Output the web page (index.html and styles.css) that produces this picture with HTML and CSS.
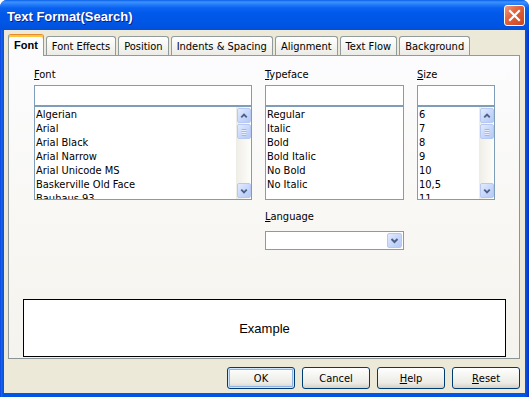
FILE: index.html
```html
<!DOCTYPE html>
<html lang="en">
<head>
<meta charset="utf-8">
<title>Text Format(Search)</title>
<link rel="stylesheet" href="styles.css">
</head>
<body>
<div class="window">
  <div class="titlebar">
    <span class="title">Text Format(Search)</span>
    <div class="close">
      <svg width="19" height="19" viewBox="0 0 19 19"><path d="M5 5 L14 14 M14 5 L5 14" stroke="#fff" stroke-width="2.2" stroke-linecap="square"/></svg>
    </div>
  </div>
  <div class="client">
    <div class="tabs">
      <div class="tab active">Font</div>
      <div class="tab">Font Effects</div>
      <div class="tab">Position</div>
      <div class="tab">Indents &amp; Spacing</div>
      <div class="tab">Alignment</div>
      <div class="tab">Text Flow</div>
      <div class="tab">Background</div>
    </div>
    <div class="panel">
      <div class="fields">
        <div class="col col-font">
          <div class="label"><u>F</u>ont</div>
          <div class="textbox"></div>
          <div class="listbox">
            <div class="items">
              <div class="item">Algerian</div>
              <div class="item">Arial</div>
              <div class="item">Arial Black</div>
              <div class="item">Arial Narrow</div>
              <div class="item">Arial Unicode MS</div>
              <div class="item">Baskerville Old Face</div>
              <div class="item">Bauhaus 93</div>
            </div>
            <div class="scrollbar">
              <div class="sbtn"><svg width="13" height="14" viewBox="0 0 13 14"><path d="M3.5 8.5 L6.5 5.5 L9.5 8.5" fill="none" stroke="#4D6185" stroke-width="2"/></svg></div>
              <div class="sbtn thumb"><svg width="13" height="14" viewBox="0 0 13 14"><path d="M4 4.5 H9 M4 6.5 H9 M4 8.5 H9 M4 10.5 H9" stroke="#8CA8E8" stroke-width="1"/><path d="M4 5.5 H9 M4 7.5 H9 M4 9.5 H9" stroke="#F2F6FE" stroke-width="1"/></svg></div>
              <div class="track"></div>
              <div class="sbtn"><svg width="13" height="14" viewBox="0 0 13 14"><path d="M3.5 5.5 L6.5 8.5 L9.5 5.5" fill="none" stroke="#4D6185" stroke-width="2"/></svg></div>
            </div>
          </div>
        </div>
        <div class="col col-type">
          <div class="label"><u>T</u>ypeface</div>
          <div class="textbox"></div>
          <div class="listbox">
            <div class="items">
              <div class="item">Regular</div>
              <div class="item">Italic</div>
              <div class="item">Bold</div>
              <div class="item">Bold Italic</div>
              <div class="item">No Bold</div>
              <div class="item">No Italic</div>
            </div>
          </div>
          <div class="label lang-label"><u>L</u>anguage</div>
          <div class="combo">
            <div class="sbtn dropbtn"><svg width="13" height="13" viewBox="0 0 13 13"><path d="M3.5 5 L6.5 8 L9.5 5" fill="none" stroke="#4D6185" stroke-width="2"/></svg></div>
          </div>
        </div>
        <div class="col col-size">
          <div class="label"><u>S</u>ize</div>
          <div class="textbox"></div>
          <div class="listbox">
            <div class="items">
              <div class="item">6</div>
              <div class="item">7</div>
              <div class="item">8</div>
              <div class="item">9</div>
              <div class="item">10</div>
              <div class="item">10,5</div>
              <div class="item">11</div>
            </div>
            <div class="scrollbar">
              <div class="sbtn"><svg width="13" height="14" viewBox="0 0 13 14"><path d="M3.5 8.5 L6.5 5.5 L9.5 8.5" fill="none" stroke="#4D6185" stroke-width="2"/></svg></div>
              <div class="sbtn thumb"><svg width="13" height="14" viewBox="0 0 13 14"><path d="M4 4.5 H9 M4 6.5 H9 M4 8.5 H9 M4 10.5 H9" stroke="#8CA8E8" stroke-width="1"/><path d="M4 5.5 H9 M4 7.5 H9 M4 9.5 H9" stroke="#F2F6FE" stroke-width="1"/></svg></div>
              <div class="track"></div>
              <div class="sbtn"><svg width="13" height="14" viewBox="0 0 13 14"><path d="M3.5 5.5 L6.5 8.5 L9.5 5.5" fill="none" stroke="#4D6185" stroke-width="2"/></svg></div>
            </div>
          </div>
        </div>
      </div>
      <div class="preview">Example</div>
    </div>
    <div class="buttons">
      <div class="btn default">OK</div>
      <div class="btn">Cancel</div>
      <div class="btn"><u>H</u>elp</div>
      <div class="btn"><u>R</u>eset</div>
    </div>
  </div>
</div>
</body>
</html>
```

FILE: styles.css
```css
html, body {
  margin: 0;
  padding: 0;
  background: #ffffff;
}

body {
  font-family: "DejaVu Sans Condensed", "Liberation Sans", sans-serif;
  font-size: 11px;
  color: #000;
}

.window {
  width: 529px;
  height: 397px;
  display: flex;
  flex-direction: column;
  background: linear-gradient(to right, #0831D9 0, #166AEE 1px, #0855DD 3px, #0055E5 4px, #0055E5 525px, #0846CF 527px, #0831D9 529px);
  border-radius: 7px 7px 0 0;
  overflow: hidden;
}

.titlebar {
  height: 30px;
  flex: none;
  display: flex;
  align-items: flex-start;
  justify-content: space-between;
  padding: 0 4px 0 7px;
  box-sizing: border-box;
  background: linear-gradient(to bottom, #0A5FE8 0, #3D93FF 2px, #2A80FA 4px, #0962EF 8px, #0058EA 14px, #0055E5 24px, #0050DA 30px);
}

.title {
  font-family: "Liberation Sans", Arial, sans-serif;
  font-weight: bold;
  font-size: 13px;
  line-height: 16px;
  color: #ffffff;
  padding-top: 9px;
  text-shadow: 1px 1px 0 #0A1E8A;
}

.close {
  margin-top: 5px;
  width: 21px;
  height: 21px;
  box-sizing: border-box;
  border: 1px solid #ffffff;
  border-radius: 3px;
  background: linear-gradient(135deg, #F09A7E 0%, #E2643E 40%, #C9441E 100%);
  display: flex;
  align-items: center;
  justify-content: center;
}

.client {
  flex: 1;
  margin: 0 4px 4px 4px;
  background: #ECE9D8;
  display: flex;
  flex-direction: column;
  padding: 4px 5px 4px 4px;
  box-sizing: border-box;
}

.tabs {
  height: 21px;
  flex: none;
  display: flex;
  align-items: flex-end;
  gap: 2px;
}

.tab {
  height: 19px;
  box-sizing: border-box;
  padding: 0 5px;
  display: flex;
  align-items: center;
  border: 1px solid #919B9C;
  border-bottom: none;
  border-radius: 3px 3px 0 0;
  background: linear-gradient(to bottom, #FFFFFF 0%, #F7F7F4 40%, #ECEBE6 100%);
  white-space: nowrap;
}

.tab.active {
  position: relative;
  z-index: 1;
  height: 22px;
  margin-bottom: -1px;
  padding: 0 5px 2px 5px;
  font-weight: bold;
  font-family: "Liberation Sans", Arial, sans-serif;
  background: #FCFCFE;
  border-top: 1px solid #E68B2C;
  box-shadow: inset 0 2px 0 #FFC73C;
}

.panel {
  flex: none;
  height: 304px;
  box-sizing: border-box;
  border: 1px solid #919B9C;
  border-right-color: #8C9596;
  border-bottom-color: #8C9596;
  background: linear-gradient(to bottom, #FCFCFE 0%, #F8F7F3 60%, #F4F3EE 100%);
  display: flex;
  flex-direction: column;
  padding-top: 12px;
}

.fields {
  display: flex;
  padding-left: 25px;
  gap: 13px;
}

.col {
  display: flex;
  flex-direction: column;
}

.col-font { width: 218px; }
.col-type { width: 139px; }
.col-size { width: 78px; }

.label {
  line-height: 13px;
  height: 13px;
  margin-bottom: 4px;
  white-space: nowrap;
}

.label u {
  text-underline-offset: 1px;
}

.lang-label {
  margin-top: 10px;
  margin-bottom: 8px;
}

.textbox {
  height: 21px;
  box-sizing: border-box;
  border: 1px solid #7F9DB9;
  background: #ffffff;
}

.listbox {
  height: 94px;
  box-sizing: border-box;
  border: 1px solid #7F9DB9;
  background: #ffffff;
  display: flex;
  overflow: hidden;
}

.items {
  flex: 1;
  overflow: hidden;
  padding-left: 1px;
}

.item {
  height: 14px;
  line-height: 15px;
  white-space: nowrap;
}

.scrollbar {
  width: 15px;
  flex: none;
  display: flex;
  flex-direction: column;
  padding: 1px 0 1px 1px;
  box-sizing: border-box;
  background: linear-gradient(to right, #EEEDE5 0%, #F6F5F0 50%, #FDFDFA 100%);
}

.sbtn {
  width: 14px;
  height: 15px;
  box-sizing: border-box;
  border: 1px solid #B7C9F2;
  border-radius: 2px;
  background: linear-gradient(135deg, #E3EBFD 0%, #CBDAFC 45%, #B6C9F6 100%);
  display: flex;
  align-items: center;
  justify-content: center;
  flex: none;
}

.thumb {
  margin-top: 1px;
}

.track {
  flex: 1;
}

.combo {
  height: 19px;
  box-sizing: border-box;
  border: 1px solid #7F9DB9;
  background: #ffffff;
  display: flex;
  justify-content: flex-end;
  align-items: center;
  padding-right: 1px;
}

.dropbtn {
  width: 15px;
  height: 15px;
}

.preview {
  margin: auto 13px 1px 14px;
  height: 58px;
  box-sizing: border-box;
  border: 1px solid #000000;
  background: #ffffff;
  display: flex;
  align-items: center;
  justify-content: center;
  font-family: "Liberation Sans", Arial, sans-serif;
  font-size: 13px;
}

.buttons {
  margin-top: 8px;
  display: flex;
  justify-content: flex-end;
  gap: 7px;
}

.btn {
  width: 68px;
  height: 22px;
  box-sizing: border-box;
  border: 1px solid #003C74;
  border-radius: 3px;
  background: linear-gradient(to bottom, #FFFFFF 0%, #F4F4F0 40%, #ECEBE6 75%, #D6D0C5 100%);
  display: flex;
  align-items: center;
  justify-content: center;
}

.btn.default {
  box-shadow: inset 0 0 0 1px #CEE7FF, inset 0 0 0 2px #8DB2E3;
}
```
